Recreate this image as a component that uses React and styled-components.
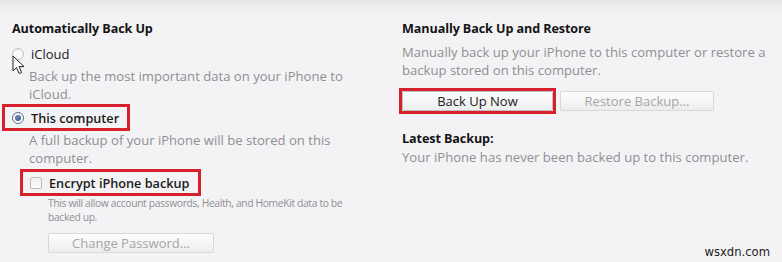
import React from "react";
import styled, { createGlobalStyle } from "styled-components";

const GlobalStyle = createGlobalStyle`
  html, body {
    margin: 0;
    padding: 0;
    background: #f3f3f5;
  }
  body {
    font-family: "Open Sans", "Noto Sans", sans-serif;
    -webkit-font-smoothing: antialiased;
  }
`;

const Page = styled.div`
  position: relative;
  width: 782px;
  height: 262px;
  overflow: hidden;
  background: linear-gradient(#e4e4e6 0, #ececee 6px, #f1f1f3 14px, #f3f3f5 20px);
  display: grid;
  grid-template-columns: 390px 1fr;
  align-items: start;
  padding: 20px 0 0 12px;
  box-sizing: border-box;
`;

const Column = styled.section`
  display: flex;
  flex-direction: column;
`;

const Heading = styled.h2`
  margin: 0;
  font-size: 12.6px;
  font-weight: 700;
  line-height: 18px;
  color: #141414;
  letter-spacing: -0.1px;
`;

const Desc = styled.p`
  margin: 0;
  padding-left: ${(p) => p.$indent ?? 0}px;
  font-size: 13.1px;
  line-height: 18px;
  color: #8f8f93;
`;

const Small = styled.p`
  margin: 0;
  padding-left: 36px;
  font-size: 10.3px;
  line-height: 14px;
  color: #8f8f93;
  letter-spacing: -0.35px;
`;

const Option = styled.label`
  display: flex;
  align-items: center;
  gap: 7px;
  height: ${(p) => p.$h ?? 20}px;
  font-size: ${(p) => (p.$strong ? 12.7 : 13)}px;
  color: #1a1a1a;
  font-weight: ${(p) => (p.$strong ? 600 : 500)};
`;

const Radio = styled.span`
  width: 10px;
  height: 10px;
  border-radius: 50%;
  border: 1px solid ${(p) => (p.$checked ? "#5a6f8c" : "#c4c4c8")};
  background: ${(p) => (p.$checked ? "#fff" : "#fafafa")};
  display: flex;
  align-items: center;
  justify-content: center;
  box-shadow: inset 0 1px 1px rgba(0, 0, 0, 0.08);
  &::after {
    content: "";
    display: ${(p) => (p.$checked ? "block" : "none")};
    width: 6px;
    height: 6px;
    border-radius: 50%;
    background: radial-gradient(circle at 40% 35%, #6f8fb8, #2f4e7a);
  }
`;

const Checkbox = styled.span`
  width: 10px;
  height: 10px;
  border: 1px solid #bdbdc1;
  border-radius: 2px;
  background: linear-gradient(#f0f0f2, #fbfbfb);
`;

const Highlight = styled.div`
  display: inline-flex;
  align-items: center;
  align-self: flex-start;
  border: 3px solid #d7202b;
  padding: 0 ${(p) => p.$padR ?? 8}px 0 ${(p) => p.$padL ?? 7}px;
  margin-left: ${(p) => p.$offset ?? 0}px;
  height: ${(p) => p.$h ?? 21}px;
`;

const Button = styled.button`
  font-family: inherit;
  font-size: 13px;
  width: ${(p) => p.$width}px;
  height: 20px;
  padding: 0;
  border: 1px solid ${(p) => (p.$disabled ? "#d8d8db" : "#bfbfc2")};
  border-radius: 2px;
  background: linear-gradient(#fdfdfd, #ededee);
  color: ${(p) => (p.$disabled ? "#a5a5a9" : "#1a1a1a")};
  font-weight: ${(p) => (p.$disabled ? 400 : 500)};
`;

const ButtonRow = styled.div`
  display: flex;
  align-items: center;
  gap: 4px;
  padding-left: ${(p) => p.$indent ?? 0}px;
`;

const Spacer = styled.div`
  height: ${(p) => p.$h}px;
`;

const Cursor = styled.svg`
  position: absolute;
  left: 12px;
  top: 55px;
`;

const Watermark = styled.span`
  position: absolute;
  right: 12px;
  bottom: 3px;
  font-family: "DejaVu Sans", sans-serif;
  font-size: 11.6px;
  color: #1e1e1e;
`;

export default function App() {
  return (
    <>
      <GlobalStyle />
      <Page>
        <Column>
          <Heading>Automatically Back Up</Heading>
          <Spacer $h={6} />
          <Option>
            <Radio />
            iCloud
          </Option>
          <Spacer $h={3} />
          <Desc $indent={17}>
            Back up the most important data on your iPhone to
            <br />
            iCloud.
          </Desc>
          <Spacer $h={1} />
          <Highlight $offset={-10}>
            <Option $strong $h={21}>
              <Radio $checked />
              This computer
            </Option>
          </Highlight>
          <Desc $indent={17}>
            A full backup of your iPhone will be stored on this
            <br />
            computer.
          </Desc>
          <Spacer $h={2} />
          <Highlight $offset={8}>
            <Option $strong $h={21}>
              <Checkbox />
              Encrypt iPhone backup
            </Option>
          </Highlight>
          <Small>
            This will allow account passwords, Health, and HomeKit data to be
            <br />
            backed up.
          </Small>
          <Spacer $h={9} />
          <ButtonRow $indent={36}>
            <Button $width={166} $disabled>
              Change Password...
            </Button>
          </ButtonRow>
        </Column>
        <Column>
          <Heading>Manually Back Up and Restore</Heading>
          <Spacer $h={5} />
          <Desc>
            Manually back up your iPhone to this computer or restore a
            <br />
            backup stored on this computer.
          </Desc>
          <Spacer $h={9} />
          <ButtonRow>
            <Highlight $offset={-3} $padL={0} $padR={0} $h={20}>
              <Button $width={151}>Back Up Now</Button>
            </Highlight>
            <Button $width={154} $disabled>
              Restore Backup...
            </Button>
          </ButtonRow>
          <Spacer $h={16} />
          <Heading>Latest Backup:</Heading>
          <Desc>Your iPhone has never been backed up to this computer.</Desc>
        </Column>
        <Cursor width="14" height="20" viewBox="0 0 14 20">
          <path
            d="M1 1 L1 16 L4.5 12.5 L7.2 18.5 L9.6 17.4 L7 11.6 L12 11.6 Z"
            fill="#fff"
            stroke="#222"
            strokeWidth="1"
            strokeLinejoin="round"
          />
        </Cursor>
        <Watermark>wsxdn.com</Watermark>
      </Page>
    </>
  );
}
